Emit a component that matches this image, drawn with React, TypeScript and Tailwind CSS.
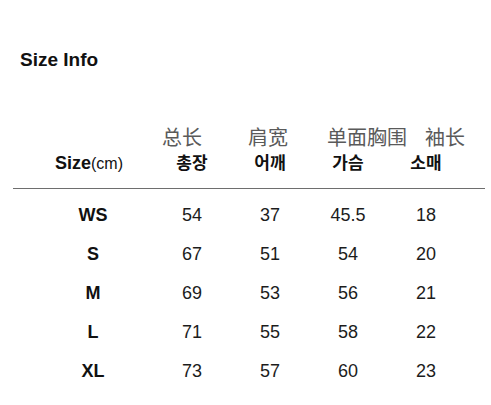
const sizes = [
  ["WS", "54", "37", "45.5", "18"],
  ["S", "67", "51", "54", "20"],
  ["M", "69", "53", "56", "21"],
  ["L", "71", "55", "58", "22"],
  ["XL", "73", "57", "60", "23"],
];

const krLabels = ["총장", "어깨", "가슴", "소매"];

export default function App() {
  return (
    <div className="w-[491px] h-[405px] bg-white text-[#111] font-['Liberation_Sans',sans-serif]">
      <h2 className="pt-[50px] pl-[20px] text-[19px] leading-none font-bold">Size Info</h2>

      <div className="ml-[13px] mr-[6px] mt-[58px] border-b border-[#6e6e6e] pb-[16px]">
        <div className="flex text-[20px] leading-none text-[#5a5a5a] font-['Noto_Sans_CJK_SC',sans-serif]">
          <span className="ml-[149px]">总长</span>
          <span className="ml-[46px]">肩宽</span>
          <span className="ml-[39px]">单面胸围</span>
          <span className="ml-[18px]">袖长</span>
        </div>
        <div className="mt-[6px] grid grid-cols-[120px_repeat(4,78px)] items-baseline pl-[20px]">
          <div className="pl-[22px] text-[18px] leading-none font-bold">
            Size<span className="text-[16px] font-normal">(cm)</span>
          </div>
          {krLabels.map((label) => (
            <div key={label} className="text-center text-[17px] leading-none font-bold font-['Noto_Sans_CJK_KR',sans-serif]">
              {label}
            </div>
          ))}
        </div>
      </div>

      <div className="mx-[13px] mt-[6px] pl-[20px]">
        {sizes.map((row) => (
          <div key={row[0]} className="grid h-[39px] grid-cols-[120px_repeat(4,78px)] items-center text-[18px] leading-none">
            <div className="text-center font-bold">{row[0]}</div>
            {row.slice(1).map((v, i) => (
              <div key={i} className="text-center text-[#1c1c1c]">{v}</div>
            ))}
          </div>
        ))}
      </div>
    </div>
  );
}
